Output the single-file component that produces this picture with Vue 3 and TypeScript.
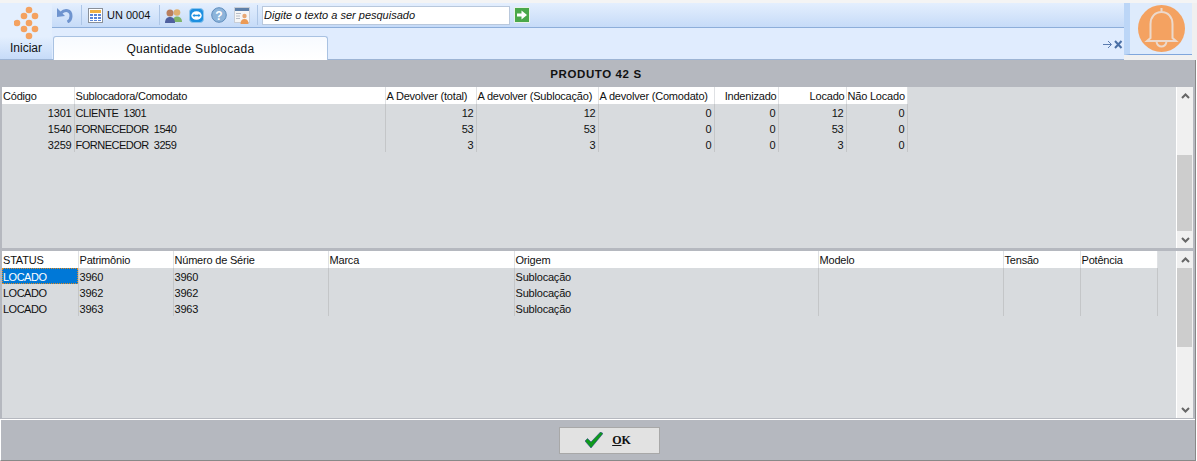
<template>
  <div class="app">
    <div class="top-strip"></div>
    <div class="ribbon">
      <div class="start">
        <svg class="logo" width="25" height="34" viewBox="0 0 25 34">
          <circle v-for="(d, i) in logoDots" :key="i" :cx="d[0]" :cy="d[1]" r="3.3" fill="#f4a261" />
        </svg>
        <span class="start-label">Iniciar</span>
      </div>
      <div class="ribbon-main">
        <div class="toolbar">
          <svg class="undo" width="16" height="16" viewBox="0 0 16 16">
            <path d="M0 1v9l8-1z" fill="#6f94cf" />
            <path d="M4 6c4-4 10-3 10 3 0 3-1.500 5-3.500 6" fill="none" stroke="#6f94cf" stroke-width="3" />
          </svg>
          <i class="sep"></i>
          <svg class="grid-icon" width="15" height="15" viewBox="0 0 15 15">
            <rect x=".5" y=".5" width="14" height="14" fill="#fff" stroke="#8a9099" />
            <rect x="2" y="2" width="11" height="3" fill="#f0b040" />
            <path d="M2 6h3v2H2zM6 6h3v2H6zM10 6h3v2h-3zM2 9h3v2H2zM6 9h3v2H6zM10 9h3v2h-3zM2 12h3v1H2zM6 12h3v1H6zM10 12h3v1h-3z" fill="#5b86d6" />
          </svg>
          <span class="unit">UN 0004</span>
          <i class="sep"></i>
          <svg class="people" width="17" height="15" viewBox="0 0 17 15">
            <circle cx="12" cy="4.500" r="3.300" fill="#e0b070" />
            <path d="M8 14c0-4 1.500-5.500 4-5.500s5 1.500 5 5.500z" fill="#7fb56a" />
            <circle cx="5" cy="5" r="3.500" fill="#b97f5f" />
            <path d="M0 15c0-4 2-6 5-6s5 2 5 6z" fill="#4f609f" />
          </svg>
          <svg width="15" height="15" viewBox="0 0 15 15">
            <rect x=".5" y=".5" width="14" height="14" rx="3.500" fill="#1d8fe0" stroke="#8cc4ee" />
            <ellipse cx="7.500" cy="7.500" rx="5.200" ry="4.300" fill="#fff" />
            <path d="M3.500 7.500l2-1.800v1.100h4V5.700l2 1.800-2 1.800V8.200h-4v1.100z" fill="#1d8fe0" />
          </svg>
          <svg width="16" height="16" viewBox="0 0 16 16">
            <circle cx="8" cy="8" r="7.300" fill="#8db4da" stroke="#5f8dbd" />
            <text x="8" y="12.500" text-anchor="middle" class="help">?</text>
          </svg>
          <svg width="16" height="17" viewBox="0 0 16 17">
            <rect x=".5" y=".5" width="15" height="15" fill="#f6f6f6" stroke="#c9ced6" />
            <rect x="1" y="1" width="14" height="3" fill="#5d7fa8" />
            <path d="M2 6.500h5M2 9h4M2 11.500h4" stroke="#b8bec8" />
            <circle cx="10.500" cy="9" r="2.200" fill="#e8a873" />
            <path d="M6.500 17c0-3.500 1.500-5 4-5s4 1.500 4 5z" fill="#ec9a55" />
          </svg>
          <i class="sep"></i>
          <input class="search" type="text" placeholder="Digite o texto a ser pesquisado" />
          <svg class="go" width="16" height="16" viewBox="0 0 16 16">
            <rect x=".5" y=".5" width="15" height="15" fill="#4aa84a" stroke="#e8f2e8" />
            <path d="M3 6.500h4.500V3.500L13 8l-5.500 4.500v-3H3z" fill="#fff" />
          </svg>
        </div>
        <div class="tabs">
          <div class="tab">Quantidade Sublocada</div>
          <div class="tab-tools">
            <svg width="20" height="9" viewBox="0 0 20 9">
              <path d="M0 4.500h8M5 1l3.500 3.500L5 8" fill="none" stroke="#5b7cb0" stroke-width="1" />
              <path d="M12 1l6.500 7M18.500 1L12 8" fill="none" stroke="#4a6fa5" stroke-width="2" />
            </svg>
          </div>
        </div>
      </div>
      <div class="bell-box">
        <div class="bell-panel">
          <svg width="47" height="47" viewBox="0 0 47 47">
            <circle cx="23.500" cy="23.500" r="23.500" fill="#f4a261" />
            <path d="M23.500 3v4M12.500 33V19c0-7 4.500-12 11-12s11 5 11 12v14l3.500 3H9z" fill="none" stroke="#ecd9cc" stroke-width="2" />
            <path d="M18.500 37c.8 3 2.800 4.500 5 4.500s4.200-1.500 5-4.500" fill="none" stroke="#ecd9cc" stroke-width="2" />
          </svg>
        </div>
      </div>
    </div>

    <div class="body">
      <div class="title">PRODUTO 42 S</div>
      <section class="pane pane-top">
        <div class="grid-wrap">
          <table class="grid" :style="{ width: sumWidth(topCols) + 'px' }">
            <colgroup>
              <col v-for="c in topCols" :key="c.label" :style="{ width: c.width + 'px' }" />
            </colgroup>
            <thead>
              <tr>
                <th v-for="c in topCols" :key="c.label" :class="{ num: c.headRight }">{{ c.label }}</th>
              </tr>
            </thead>
            <tbody>
              <tr v-for="(r, i) in topRows" :key="i">
                <td v-for="(v, j) in r" :key="j" :class="{ num: topCols[j].num, caps: topCols[j].caps }">{{ v }}</td>
              </tr>
            </tbody>
          </table>
        </div>
        <div class="scroll">
          <span class="btn"><svg width="9" height="6" viewBox="0 0 9 6"><path d="M1 5l3.500-3.500L8 5" fill="none" stroke="#666" stroke-width="2" /></svg></span>
          <div class="track"><div class="thumb thumb-top"></div></div>
          <span class="btn"><svg width="9" height="6" viewBox="0 0 9 6"><path d="M1 1l3.500 3.500L8 1" fill="none" stroke="#666" stroke-width="2" /></svg></span>
        </div>
      </section>
      <div class="splitter"></div>
      <section class="pane pane-bottom">
        <div class="grid-wrap">
          <table class="grid" :style="{ width: sumWidth(bottomCols) + 'px' }">
            <colgroup>
              <col v-for="c in bottomCols" :key="c.label" :style="{ width: c.width + 'px' }" />
            </colgroup>
            <thead>
              <tr>
                <th v-for="c in bottomCols" :key="c.label">{{ c.label }}</th>
              </tr>
            </thead>
            <tbody>
              <tr v-for="(r, i) in bottomRows" :key="i">
                <td v-for="(v, j) in r" :key="j" :class="{ selected: i === 0 && j === 0, caps: bottomCols[j].caps }">{{ v }}</td>
              </tr>
            </tbody>
          </table>
        </div>
        <div class="scroll">
          <span class="btn"><svg width="9" height="6" viewBox="0 0 9 6"><path d="M1 5l3.500-3.500L8 5" fill="none" stroke="#666" stroke-width="2" /></svg></span>
          <div class="track"><div class="thumb thumb-bottom"></div></div>
          <span class="btn"><svg width="9" height="6" viewBox="0 0 9 6"><path d="M1 1l3.500 3.500L8 1" fill="none" stroke="#666" stroke-width="2" /></svg></span>
        </div>
      </section>
      <div class="footer">
        <button class="ok" type="button">
          <svg width="18" height="16" viewBox="0 0 18 16">
            <path d="M0 9l2.500-2.500L6 10 15.500 0 18 1.500 6 16z" fill="#0f9a1c" stroke="#1a2a8c" stroke-width=".5" />
          </svg>
          <span><u>O</u>K</span>
        </button>
      </div>
    </div>
  </div>
</template>

<script setup lang="ts">
interface Col {
  label: string;
  width: number;
  num?: boolean;
  headRight?: boolean;
  caps?: boolean;
}

// centers of the logo dots
const logoDots: number[][] = [
  [15, 4], [10, 10], [21, 10], [3, 17], [15, 17], [21, 23], [10, 23], [15, 30],
];

const topCols: Col[] = [
  { label: 'Código', width: 72, num: true },
  { label: 'Sublocadora/Comodato', width: 311, caps: true },
  { label: 'A Devolver (total)', width: 91, num: true },
  { label: 'A devolver (Sublocação)', width: 122, num: true },
  { label: 'A devolver (Comodato)', width: 116, num: true },
  { label: 'Indenizado', width: 64, num: true, headRight: true },
  { label: 'Locado', width: 68, num: true, headRight: true },
  { label: 'Não Locado', width: 61, num: true },
];

const topRows = [
  ['1301', 'CLIENTE  1301', '12', '12', '0', '0', '12', '0'],
  ['1540', 'FORNECEDOR  1540', '53', '53', '0', '0', '53', '0'],
  ['3259', 'FORNECEDOR  3259', '3', '3', '0', '0', '3', '0'],
];

const bottomCols: Col[] = [
  { label: 'STATUS', width: 76, caps: true },
  { label: 'Patrimônio', width: 95 },
  { label: 'Número de Série', width: 155 },
  { label: 'Marca', width: 186 },
  { label: 'Origem', width: 304 },
  { label: 'Modelo', width: 185 },
  { label: 'Tensão', width: 77 },
  { label: 'Potência', width: 77 },
];

const bottomRows = [
  ['LOCADO', '3960', '3960', '', 'Sublocação', '', '', ''],
  ['LOCADO', '3962', '3962', '', 'Sublocação', '', '', ''],
  ['LOCADO', '3963', '3963', '', 'Sublocação', '', '', ''],
];

const sumWidth = (cols: Col[]) => cols.reduce((t, c) => t + c.width, 0);
</script>

<style>
html,
body {
  margin: 0;
  overflow: hidden;
}
</style>

<style scoped>
.app {
  width: 1197px;
  height: 461px;
  display: flex;
  flex-direction: column;
  font-family: "Liberation Sans", sans-serif;
  font-size: 11px;
  color: #111;
  background: #fff;
  overflow: hidden;
}

.top-strip {
  height: 3px;
  background: #f4f4f4;
}

.ribbon {
  height: 57px;
  display: flex;
  background: #deebfc;
}

.start {
  width: 52px;
  display: flex;
  flex-direction: column;
  align-items: center;
  background: linear-gradient(#e4effe 60%, #c6dbf8);
  border-bottom: 1px solid #9db4d4;
  box-sizing: border-box;
}

.logo {
  margin-top: 3px;
  flex: none;
}

.start-label {
  margin-top: 1px;
  font-size: 12px;
}

.ribbon-main {
  flex: 1;
  display: flex;
  flex-direction: column;
}

.toolbar {
  height: 25px;
  box-sizing: border-box;
  display: flex;
  align-items: center;
  gap: 7px;
  padding-left: 5px;
  background: linear-gradient(#e4effe, #c6dbf8);
  border-bottom: 1px solid #8daeda;
}

.undo {
  margin-right: 1px;
}

.sep {
  width: 1px;
  height: 20px;
  background: #aec6e6;
}

.grid-icon {
  margin-left: -1px;
  margin-right: -3px;
}

.unit {
  width: 44px;
  font-size: 11px;
  white-space: nowrap;
  margin-right: 1px;
}

.people {
  margin-left: -2px;
}

.search {
  width: 248px;
  height: 19px;
  box-sizing: border-box;
  padding: 0 1px;
  margin-left: -3px;
  border: 1px solid #b9c8dc;
  font: italic 11px "Liberation Sans", sans-serif;
  background: #fff;
  outline: none;
}

.search::placeholder {
  color: #111;
  opacity: 1;
}

.go {
  margin-left: -3px;
}

.help {
  font: bold 12px "Liberation Sans", sans-serif;
  fill: #fff;
}

.tabs {
  flex: 1;
  display: flex;
  align-items: flex-end;
  justify-content: space-between;
  background: #e0ecfe;
  border-bottom: 1px solid #9db4d4;
}

.tab {
  width: 275px;
  height: 24px;
  margin-left: 1px;
  margin-bottom: -1px;
  line-height: 24px;
  text-align: center;
  font-size: 12px;
  letter-spacing: .3px;
  background: linear-gradient(#f7faff, #fff);
  border: 1px solid #a9c2e2;
  border-bottom: 0;
  border-radius: 3px 3px 0 0;
  box-sizing: border-box;
}

.tab-tools {
  display: flex;
  align-items: center;
  margin-right: 1px;
  height: 23px;
  padding-bottom: 7px;
  box-sizing: border-box;
}

.bell-box {
  width: 73px;
  padding-bottom: 5px;
  background: #f0f0f0;
  display: flex;
}

.bell-panel {
  flex: 1;
  margin-right: 5px;
  display: flex;
  justify-content: center;
  align-items: center;
  background: #deebfc;
  border-left: 6px solid #bcd6f7;
  border-bottom: 1px solid #7fa6dc;
}

.body {
  flex: 1;
  display: flex;
  flex-direction: column;
  background: #b5b8bf;
  min-height: 0;
  margin-right: 1px;
  border-right: 1px solid #888;
}

.title {
  height: 27px;
  line-height: 28px;
  padding-right: 3px;
  text-align: center;
  font-weight: bold;
  font-size: 11.5px;
  letter-spacing: .6px;
  color: #111;
}

.pane {
  display: flex;
  background: #d8dbde;
  margin-left: 2px;
  margin-right: 2px;
}

.pane-top {
  height: 161px;
}

.pane-bottom {
  height: 167px;
}

.splitter {
  height: 3px;
  background: #b5b8bf;
}

.grid-wrap {
  flex: 1;
  overflow: hidden;
}

.grid {
  border-collapse: collapse;
  table-layout: fixed;
}

.grid th {
  height: 17px;
  padding: 0 1px;
  background: #fff;
  font-weight: normal;
  letter-spacing: -.2px;
  text-align: left;
  white-space: nowrap;
  border-right: 1px solid #dfe1e4;
}

.grid td {
  height: 16px;
  padding: 2px 2px 0 1px;
  box-sizing: border-box;
  line-height: 14px;
  letter-spacing: -.2px;
  white-space: pre;
  overflow: hidden;
  border-right: 1px solid #c4c6c8;
}

.grid .num {
  text-align: right;
}

.grid .caps {
  letter-spacing: -.5px;
}

.grid .selected {
  background: #0078d7;
  color: #fff;
  outline: 1px dotted #e08a20;
  outline-offset: -1px;
}

.scroll {
  width: 16px;
  display: flex;
  flex-direction: column;
  background: #f0f0f0;
  border-left: 1px solid #fff;
}

.btn {
  height: 17px;
  flex: none;
  display: flex;
  align-items: center;
  justify-content: center;
}

.track {
  flex: 1;
  display: flex;
  flex-direction: column;
  justify-content: flex-end;
}

.thumb {
  background: #cdcdcd;
  margin-right: 1px;
}

.thumb-top {
  height: 76px;
}

.thumb-bottom {
  height: 79px;
  margin-bottom: 54px;
}

.footer {
  flex: 1;
  display: flex;
  justify-content: center;
  align-items: center;
  padding-left: 22px;
  margin-top: 1px;
  border-top: 1px solid #fff;
  border-left: 1px solid #fff;
  border-bottom: 1px solid #888;
}

.ok {
  width: 101px;
  height: 27px;
  display: flex;
  align-items: center;
  justify-content: center;
  gap: 9px;
  background: #e2e2e2;
  border: 1px solid #a8a8a8;
  font: bold 12px "Liberation Serif", serif;
  color: #111;
}

.ok svg {
  margin-left: -2px;
}
</style>
